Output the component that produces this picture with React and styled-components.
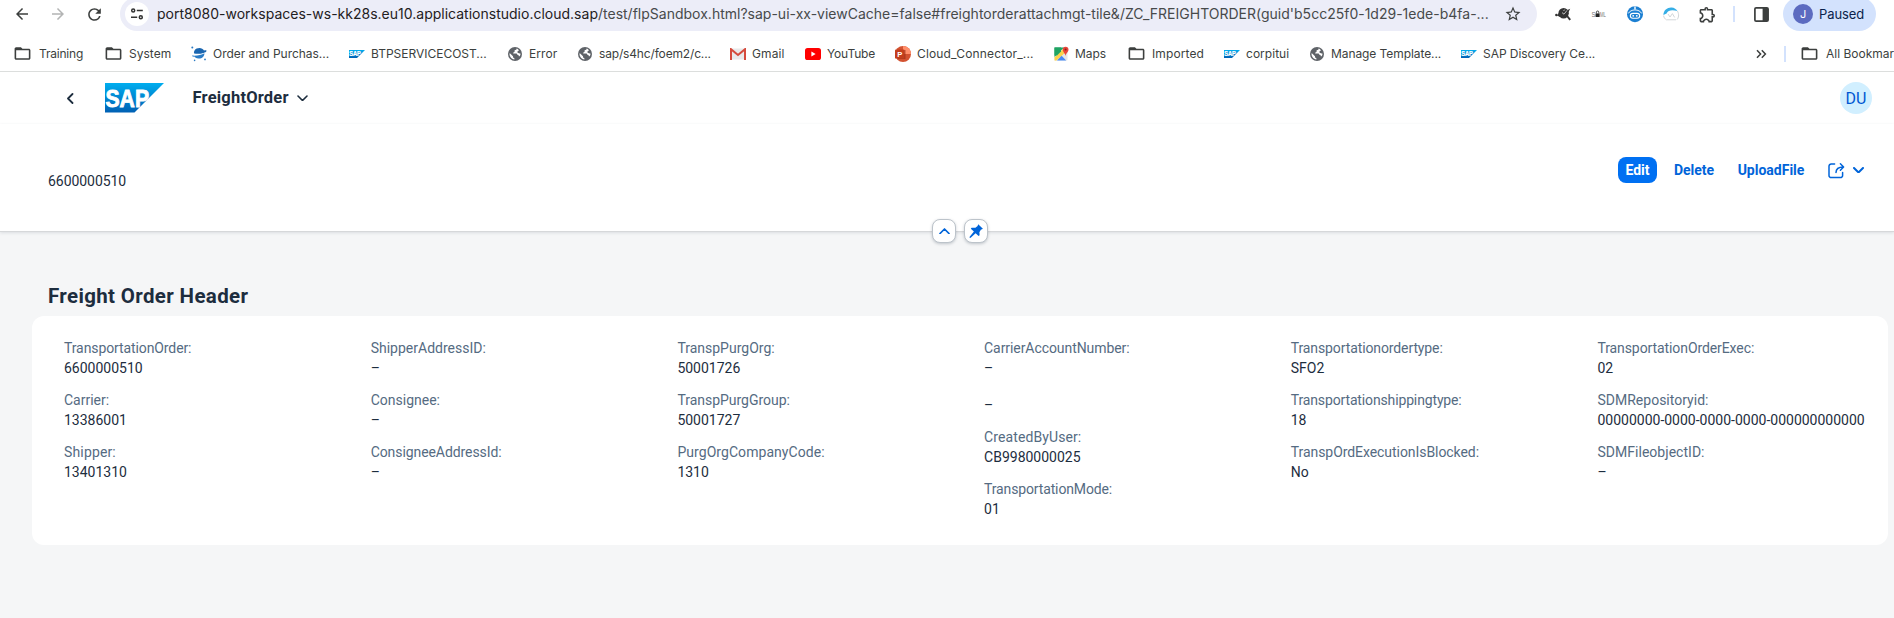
import React from "react";
import styled, { createGlobalStyle } from "styled-components";
import { MdArrowBack, MdArrowForward, MdRefresh, MdStarBorder, MdFolderOpen, MdOutlineExtension } from "react-icons/md";

const GlobalStyle = createGlobalStyle`
  * { box-sizing: border-box; }
  body { margin: 0; background: #f5f6f7; overflow: hidden; font-family: Roboto, "Open Sans", sans-serif; color: #1d2d3e; }
  svg { display: block; flex: none; }
`;

const Page = styled.div`
  width: 1894px;
  height: 618px;
  overflow: hidden;
  display: flex;
  flex-direction: column;
`;

/* ---------- browser chrome ---------- */

const Chrome = styled.header`
  height: 72px;
  flex: none;
  background: #fff;
  border-bottom: 1px solid #dcdedd;
  font-family: Inter, sans-serif;
  color: #3c3f3e;
  overflow: hidden;
`;

const Toolbar = styled.div`
  display: flex;
  align-items: center;
  height: 34px;
  margin-top: -3px;
`;

const NavButtons = styled.div`
  display: flex;
  align-items: center;
  width: 120px;
  padding-left: 13px;
  gap: 18px;
`;

const AddressBar = styled.div`
  display: flex;
  align-items: center;
  width: 1417px;
  height: 34px;
  border-radius: 17px;
  background: #ecedf8;
  padding: 0 15px 0 5px;
`;

const SiteInfo = styled.span`
  display: grid;
  place-items: center;
  width: 24px;
  height: 24px;
  border-radius: 50%;
  background: #fff;
  color: #333;
`;

const Url = styled.span`
  margin-left: 8px;
  flex: 1;
  font-size: 14px;
  letter-spacing: 0.005px;
  line-height: 20px;
  white-space: nowrap;
  color: #474a4b;
`;

const UrlHost = styled.span`
  color: #1f2022;
`;

const Extensions = styled.div`
  display: flex;
  align-items: center;
  width: 196px;
  padding-left: 17px;
  gap: 18px;
`;

const Divider = styled.span`
  flex: none;
  width: 2px;
  height: 16px;
  background: #d3e2fd;
`;

const PanelIcon = styled.span`
  margin-left: 19px;
`;

const ProfilePill = styled.div`
  display: flex;
  align-items: center;
  gap: 6px;
  width: 93px;
  height: 34px;
  margin-left: 14px;
  padding-left: 10px;
  border-radius: 17px;
  background: #d3e2fd;
  color: #0b1f4b;
  font-size: 13px;
  letter-spacing: -0.08px;
`;

const ProfileAvatar = styled.span`
  display: grid;
  place-items: center;
  width: 20px;
  height: 20px;
  border-radius: 50%;
  background: #5c6bc0;
  color: #fff;
  font-size: 11px;
`;

const Bookmarks = styled.nav`
  display: flex;
  align-items: center;
  height: 40px;
  padding: 5px 0 0 14px;
`;

const Bookmark = styled.span`
  display: flex;
  align-items: center;
  width: ${(p) => p.$w}px;
  flex: none;
  font-size: 12px;
  line-height: 16px;
  letter-spacing: ${(p) => p.$ls || 0}px;
  white-space: nowrap;
`;

const AllBookmarks = styled(Bookmark)`
  margin-left: 15px;
`;

const BookmarkIcon = styled.span`
  display: flex;
  justify-content: flex-start;
  width: ${(p) => p.$w}px;
  flex: none;
`;

const Folder = styled(MdFolderOpen)`
  width: 19px;
  height: 19px;
  margin-left: -1px;
`;

const MoreBookmarks = styled.span`
  display: flex;
  flex: none;
  width: 28px;
`;

/* ---------- shell and page header ---------- */

const Shell = styled.div`
  display: flex;
  align-items: center;
  height: 52px;
  flex: none;
  padding: 0 22px 0 67px;
  background: #fff;
`;

const Logo = styled.span`
  margin-left: 31px;
`;

const AppTitle = styled.h1`
  margin: 0 8px 0 29px;
  font-size: 16.5px;
  line-height: 20px;
  font-weight: 700;
  letter-spacing: 0.2px;
`;

const UserAvatar = styled.span`
  display: grid;
  place-items: center;
  width: 32px;
  height: 32px;
  margin-left: auto;
  border-radius: 50%;
  background: #d1efff;
  color: #0057d2;
  font-size: 16px;
`;

const ObjectHeader = styled.section`
  position: relative;
  display: flex;
  justify-content: space-between;
  height: 108px;
  flex: none;
  padding: 33px 30px 0 48px;
  background: #fff;
  border-bottom: 1px solid #d6d8da;
  box-shadow: 0 1px 3px rgba(34, 53, 72, 0.12);
`;

const ObjectId = styled.span`
  padding-top: 14px;
  font-size: 14px;
  line-height: 20px;
  letter-spacing: -0.05px;
`;

const Actions = styled.div`
  display: flex;
  align-items: center;
  height: 26px;
`;

const Action = styled.button`
  height: 26px;
  width: ${(p) => p.$w}px;
  margin: 0 0 0 ${(p) => p.$ml || 0}px;
  padding: 0;
  border: 0;
  border-radius: 8px;
  background: ${(p) => (p.$primary ? "#0070f2" : "transparent")};
  color: ${(p) => (p.$primary ? "#fff" : "#0064d9")};
  font: 700 14px/26px Roboto, sans-serif;
  white-space: nowrap;
`;

const ShareGroup = styled.span`
  display: flex;
  align-items: center;
  gap: 8px;
  margin-left: 23px;
`;

const HeaderToggles = styled.div`
  position: absolute;
  left: 932px;
  bottom: -12px;
  display: flex;
  gap: 8px;
`;

const Toggle = styled.span`
  display: grid;
  place-items: center;
  width: 24px;
  height: 24px;
  border: 1px solid #bcc3ca;
  border-radius: 8px;
  background: #fff;
  box-shadow: 0 1px 3px rgba(34, 53, 72, 0.25);
`;

/* ---------- content ---------- */

const Content = styled.main`
  padding: 52px 6px 0 32px;
`;

const SectionTitle = styled.h2`
  margin: 0 0 8px 16px;
  font-size: 20.5px;
  line-height: 24px;
  font-weight: 700;
  letter-spacing: 0.35px;
`;

const Card = styled.div`
  display: grid;
  grid-template-columns: repeat(6, 306.7px);
  height: 229px;
  padding: 22px 0 0 32px;
  border-radius: 12px;
  background: #fff;
  overflow: hidden;
`;

const Column = styled.div`
  display: flex;
  flex-direction: column;
  gap: 12px;
`;

const Field = styled.div`
  display: flex;
  flex-direction: column;
  padding-top: ${(p) => (p.$bare ? 5.3 : 0)}px;
`;

const Label = styled.span`
  font-size: 14px;
  line-height: 20px;
  color: #556b82;
  letter-spacing: ${(p) => p.$ls || 0}px;
  white-space: nowrap;
`;

const Value = styled(Label)`
  color: #1d2d3e;
`;

const Chevron = ({ dir, w = 10, stroke = 1.6, color = "#1d2d3e" }) => {
  const h = w / 2 + 1;
  const props = { fill: "none", stroke: color, strokeWidth: stroke, strokeLinecap: "round", strokeLinejoin: "round" };
  if (dir === "left")
    return (
      <svg width={h} height={w} {...props}>
        <path d={`M${h - 1} 1L1 ${w / 2}L${h - 1} ${w - 1}`} />
      </svg>
    );
  return (
    <svg width={w} height={h} {...props}>
      <path d={dir === "up" ? `M1 ${h - 1}L${w / 2} 1L${w - 1} ${h - 1}` : `M1 1L${w / 2} ${h - 1}L${w - 1} 1`} />
    </svg>
  );
};

const SapLogo = ({ width = 59, id }) => (
  <svg width={width} height={width / 2} viewBox="0 0 59 29.5">
    <defs>
      <linearGradient id={id} x1="0" y1="0" x2="0" y2="1">
        <stop offset="0" stopColor="#00aeef" />
        <stop offset="1" stopColor="#0060b4" />
      </linearGradient>
    </defs>
    <path d="M0 0H59L29.5 29.5H0Z" fill={`url(#${id})`} />
    <text x="0.5" y="23.6" fontFamily="Liberation Sans, sans-serif" fontWeight="700" fontSize="24.5" textLength="43.5" lengthAdjust="spacingAndGlyphs" fill="#fff" stroke="#fff" strokeWidth="0.9">
      SAP
    </text>
  </svg>
);

const Globe = () => (
  <svg width="14" height="14" viewBox="0 0 14 14">
    <circle cx="7" cy="7" r="7" fill="#5f6368" />
    <path d="M8.600 1.500C8.800 2.600 7.800 3.200 6.600 3.200V4.400C6.600 5.200 5.400 5 5.200 5.800V6.400H8.200C9 6.400 9.200 7 9.200 7.800C10.400 7.800 10.800 8.400 11 9.600C12.200 8.800 12.600 7.600 12.400 6.400C11.200 6.600 9.600 6.200 9.400 5C9.400 4.200 10.200 4 11 3.600C10.400 2.400 9.600 1.800 8.600 1.500Z" fill="#fff" />
    <path d="M1.500 6.600C1.400 9.600 3.400 12.200 6.400 12.500V11.200C5.600 11.200 5 10.600 5 9.800V9.200L1.900 6.200Z" fill="#fff" />
  </svg>
);

const Planet = () => (
  <svg width="16" height="16" viewBox="0 0 16 16">
    <path d="M3.200 7.600C2.400 6.600 3.400 3.600 5.600 2.600C8.400 1.200 11.800 2 13 4.600C14.800 4 15.800 4.200 15.400 5.200C14.800 6.600 9.400 8.600 3.200 7.600Z" fill="#1a66b0" />
    <path d="M1.200 9.600C6 10 10.600 8.800 13.400 7.200C13.600 10.200 11 12.800 7.600 12.600C5.200 12.400 3.800 11.400 3.200 10.600C2 10.800 0.600 10.400 1.200 9.600Z" fill="#2a7cc6" />
    <circle cx="1.300" cy="1.600" r="1" fill="#2d7cc4" />
    <circle cx="3.600" cy="14.400" r="0.800" fill="#2d7cc4" />
    <circle cx="14" cy="13.400" r="0.900" fill="#2d7cc4" />
  </svg>
);

const Gmail = () => (
  <svg width="16" height="12" viewBox="0 0 16 12">
    <rect x="1" y="0.5" width="14" height="11" fill="#e9e9ea" />
    <path d="M1 12V1.2L8 7L15 1.2V12" fill="none" stroke="#d54b3d" strokeWidth="2" />
  </svg>
);

const YouTube = () => (
  <svg width="16" height="12" viewBox="0 0 16 12">
    <rect width="16" height="12" rx="2.6" fill="#f00" />
    <path d="M6.4 3.6L10.6 6L6.4 8.4Z" fill="#fff" />
  </svg>
);

const PowerPoint = () => (
  <svg width="16" height="16" viewBox="0 0 16 16">
    <circle cx="8" cy="8" r="8" fill="#d35230" />
    <path d="M8 0A8 8 0 0 1 16 8H8Z" fill="#ff8f6b" />
    <path d="M1.5 4H10.5V13H3Z" fill="#8f2c14" opacity="0.6" />
    <rect y="3.6" width="9.4" height="9" rx="0.9" fill="#c43e1c" />
    <text x="2.2" y="10.9" fontFamily="Liberation Sans, sans-serif" fontWeight="700" fontSize="7.6" fill="#fff">P</text>
  </svg>
);

const MapsIcon = () => (
  <svg width="16" height="16" viewBox="0 0 16 16">
    <rect x="0.5" y="1.5" width="13" height="13" rx="1" fill="#e4e6e8" />
    <path d="M0.5 1.5H10L0.5 11Z" fill="#1fa463" />
    <path d="M0.5 11.5L10.5 1.5L13.5 4.6L2.5 14.5H0.5Z" fill="#fbd24b" />
    <path d="M3 14.5L7.6 9.8L12.2 14.5Z" fill="#4889f4" />
    <path d="M0.5 1.5H7V5.5L3 9.5H0.5Z" fill="#1fa463" />
    <path d="M11.5 10C11.3 7.4 8.7 6.4 8.7 3.6A2.9 2.9 0 0 1 14.5 3.6C14.5 6.4 11.8 7.4 11.5 10Z" fill="#e8453a" />
    <circle cx="11.6" cy="3.5" r="1" fill="#8c2018" />
  </svg>
);

const Tune = () => (
  <svg width="14" height="14" viewBox="0 0 14 14" fill="none" stroke="#333" strokeWidth="1.5">
    <circle cx="3.2" cy="3.6" r="1.5" />
    <path d="M6.8 3.6H12.8M1 10.2H7.2" />
    <circle cx="10.8" cy="10.2" r="1.5" />
  </svg>
);

const DarkBird = () => (
  <svg width="18" height="16" viewBox="0 0 18 16">
    <circle cx="2.400" cy="9" r="1.300" fill="#333" />
    <circle cx="9.600" cy="7.200" r="5.200" fill="#333" />
    <path d="M3 9.600L6 6V11ZM12.400 4.400L16.200 2.800L14 7ZM12 10L13.400 9L17 13.200L15.400 14.600Z" fill="#333" />
    <path d="M8 6.600L10 8.200L13 4.400M9.600 5L10.600 3.600" fill="none" stroke="#ddd" strokeWidth="0.800" />
  </svg>
);

const Saml = () => (
  <svg width="18" height="16" viewBox="0 0 18 16">
    <text x="1.500" y="11" fontFamily="Liberation Sans, sans-serif" fontSize="8" fill="#777" textLength="4" lengthAdjust="spacingAndGlyphs">S</text>
    <rect x="5.600" y="7.400" width="4" height="3.600" fill="#222" />
    <path d="M6.400 7.400V6.200A1.200 1.200 0 0 1 8.800 6.200V7.400" fill="none" stroke="#222" strokeWidth="0.800" />
    <text x="10" y="11" fontFamily="Liberation Sans, sans-serif" fontSize="8" fill="#777" textLength="6" lengthAdjust="spacingAndGlyphs">ML</text>
  </svg>
);

const Robot = () => (
  <svg width="18" height="18" viewBox="0 0 18 18">
    <circle cx="9" cy="9.200" r="8" fill="#1b7fd2" />
    <path d="M2.400 8.400C4.400 3.800 13.600 3.800 15.600 8.400" fill="none" stroke="#fff" strokeWidth="0.900" />
    <path d="M8.300 1.600H9.700V4.400H8.300Z" fill="#fff" />
    <rect x="3.800" y="7.800" width="10.400" height="6" rx="3" fill="#fff" />
    <rect x="4.900" y="8.900" width="8.200" height="3.800" rx="1.900" fill="#1b7fd2" />
    <circle cx="7.200" cy="10.800" r="0.900" fill="#fff" />
    <circle cx="10.800" cy="10.800" r="0.900" fill="#fff" />
  </svg>
);

const Helmet = () => (
  <svg width="18" height="16" viewBox="0 0 18 16" fill="none">
    <path d="M1.400 9C1.400 4 5.600 1.200 9.400 1.400C12.400 1.600 14.400 3 15.400 5C11 3.600 6 3.600 4.600 7.400Z" fill="#35aee6" />
    <path d="M15.400 5C17.400 8.400 16.600 12 15 13.600M1.600 9.600C1.800 11.600 3 13 4.400 13.800H14" stroke="#d2d6d9" />
    <path d="M6 8L8 11L10.400 7.600L12.600 11.400" stroke="#d2d6d9" />
  </svg>
);

const SidePanel = () => (
  <svg width="15" height="15" viewBox="0 0 15 15">
    <rect x="0.9" y="0.9" width="13.2" height="13.2" rx="1.2" fill="none" stroke="#3c3f3e" strokeWidth="1.7" />
    <path d="M8.6 1H14V14H8.6Z" fill="#3c3f3e" />
  </svg>
);

const DoubleChevron = () => (
  <svg width="11" height="10" viewBox="0 0 11 10" fill="none" stroke="#3c3f3e" strokeWidth="1.5">
    <path d="M1 1.2L4.6 5L1 8.8M5.8 1.2L9.4 5L5.8 8.8" />
  </svg>
);

const Share = () => (
  <svg width="17" height="17" viewBox="0 0 17 17" fill="none" stroke="#0064d9" strokeWidth="1.5" strokeLinecap="round" strokeLinejoin="round">
    <path d="M6.6 2H3.2A2.2 2.2 0 0 0 1 4.2V13.4A2.2 2.2 0 0 0 3.2 15.6H12.4A2.2 2.2 0 0 0 14.6 13.4V10.4" />
    <path d="M8 10.6C8 7 10 5 15.4 5M12.4 1.8L15.6 5L12.4 8.2" />
  </svg>
);

const Pin = () => (
  <svg width="16" height="16" viewBox="0 0 16 16" fill="#0064d9">
    <path d="M10.2 1.3L14.9 5.8L13.6 6.5L13 6.6L11.4 9.2L11.6 12.2L10.6 12.9L7.6 10.2L2.4 15L1.3 14.2L5.9 8.5L2.8 5.8L3.6 4.7L7.4 4.7L9.6 2.9Z" />
  </svg>
);

/* name, icon, icon slot width, width up to the next bookmark, letter spacing */
const bookmarks = [
  ["Training", <Folder />, 25, 91, -0.19],
  ["System", <Folder />, 24, 86, 0.02],
  ["Order and Purchas...", <Planet />, 22, 158, -0.03],
  ["BTPSERVICECOST...", <SapLogo width={16} id="sap1" />, 22, 159, -0.01],
  ["Error", <Globe />, 21, 70, 0.05],
  ["sap/s4hc/foem2/c...", <Globe />, 21, 152, -0.16],
  ["Gmail", <Gmail />, 22, 75, 0.1],
  ["YouTube", <YouTube />, 22, 90, -0.15],
  ["Cloud_Connector_...", <PowerPoint />, 22, 159, 0.16],
  ["Maps", <MapsIcon />, 21, 74, -0.02],
  ["Imported", <Folder />, 24, 96, 0.1],
  ["corpitui", <SapLogo width={16} id="sap2" />, 22, 86, 0.03],
  ["Manage Template...", <Globe />, 21, 151, -0.08],
  ["SAP Discovery Ce...", <SapLogo width={16} id="sap3" />, 22, 295, -0.05],
];

/* label, value, label letter spacing */
const columns = [
  [["TransportationOrder:", "6600000510", -0.1], ["Carrier:", "13386001"], ["Shipper:", "13401310", 0.15]],
  [["ShipperAddressID:", "–", 0], ["Consignee:", "–", 0], ["ConsigneeAddressId:", "–", -0.08]],
  [["TranspPurgOrg:", "50001726", 0], ["TranspPurgGroup:", "50001727", -0.02], ["PurgOrgCompanyCode:", "1310", 0.06]],
  [["CarrierAccountNumber:", "–", -0.07], [null, "–"], ["CreatedByUser:", "CB9980000025", 0.1], ["TransportationMode:", "01", -0.14]],
  [["Transportationordertype:", "SFO2", -0.11], ["Transportationshippingtype:", "18", -0.14], ["TranspOrdExecutionIsBlocked:", "No", -0.06]],
  [["TransportationOrderExec:", "02", -0.09], ["SDMRepositoryid:", "00000000-0000-0000-0000-000000000000", 0.01], ["SDMFileobjectID:", "–", 0.03]],
];

export default function App() {
  return (
    <Page>
      <GlobalStyle />
      <Chrome>
        <Toolbar>
          <NavButtons>
            <MdArrowBack size={18} />
            <MdArrowForward size={18} color="#b3b4b4" />
            <MdRefresh size={19} />
          </NavButtons>
          <AddressBar>
            <SiteInfo><Tune /></SiteInfo>
            <Url>
              <UrlHost>port8080-workspaces-ws-kk28s.eu10.applicationstudio.cloud.sap</UrlHost>
              /test/flpSandbox.html?sap-ui-xx-viewCache=false#freightorderattachmgt-tile&amp;/ZC_FREIGHTORDER(guid'b5cc25f0-1d29-1ede-b4fa-...
            </Url>
            <MdStarBorder size={18} />
          </AddressBar>
          <Extensions>
            <DarkBird /><Saml /><Robot /><Helmet />
            <MdOutlineExtension size={19} />
          </Extensions>
          <Divider />
          <PanelIcon><SidePanel /></PanelIcon>
          <ProfilePill><ProfileAvatar>J</ProfileAvatar>Paused</ProfilePill>
        </Toolbar>
        <Bookmarks>
          {bookmarks.map(([name, icon, iconW, w, ls]) => (
            <Bookmark key={name} $w={w} $ls={ls}>
              <BookmarkIcon $w={iconW}>{icon}</BookmarkIcon>
              {name}
            </Bookmark>
          ))}
          <MoreBookmarks><DoubleChevron /></MoreBookmarks>
          <Divider />
          <AllBookmarks $w={110}>
            <BookmarkIcon $w={25}><Folder /></BookmarkIcon>
            All Bookmarks
          </AllBookmarks>
        </Bookmarks>
      </Chrome>
      <Shell>
        <Chevron dir="left" w={11} stroke={1.8} />
        <Logo><SapLogo id="sap0" /></Logo>
        <AppTitle>FreightOrder</AppTitle>
        <Chevron dir="down" w={11} />
        <UserAvatar>DU</UserAvatar>
      </Shell>
      <ObjectHeader>
        <ObjectId>6600000510</ObjectId>
        <Actions>
          <Action $primary $w={39}>Edit</Action>
          <Action $ml={16} $w={42}>Delete</Action>
          <Action $ml={22} $w={68}>UploadFile</Action>
          <ShareGroup><Share /><Chevron dir="down" w={11} stroke={2} color="#0064d9" /></ShareGroup>
        </Actions>
        <HeaderToggles>
          <Toggle><Chevron dir="up" w={11} stroke={1.7} color="#0064d9" /></Toggle>
          <Toggle><Pin /></Toggle>
        </HeaderToggles>
      </ObjectHeader>
      <Content>
        <SectionTitle>Freight Order Header</SectionTitle>
        <Card>
          {columns.map((fields, i) => (
            <Column key={i}>
              {fields.map(([label, value, ls], j) => (
                <Field key={j} $bare={!label}>
                  {label && <Label $ls={ls}>{label}</Label>}
                  <Value>{value}</Value>
                </Field>
              ))}
            </Column>
          ))}
        </Card>
      </Content>
    </Page>
  );
}
